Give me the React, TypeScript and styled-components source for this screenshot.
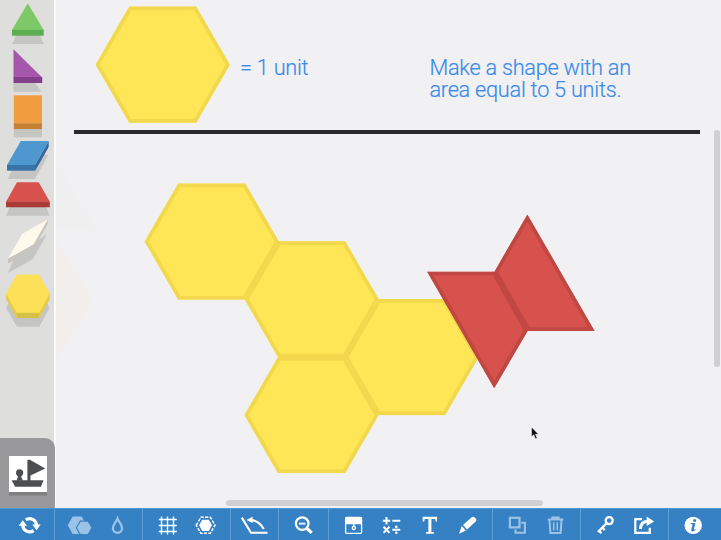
import React from "react";
import styled, { createGlobalStyle } from "styled-components";

const Global = createGlobalStyle`
  html, body { margin: 0; padding: 0; overflow: hidden; }
  body { font-family: Roboto, "Liberation Sans", sans-serif; }
  svg { display: block; flex: none; }
`;

const Page = styled.div`
  width: 721px;
  height: 540px;
  display: flex;
  flex-direction: column;
  background: #f1f1f3;
  overflow: hidden;
`;
const Main = styled.div`
  display: flex;
  height: 508px;
`;
const Sidebar = styled.aside`
  width: 56px;
  box-sizing: border-box;
  border-right: 2px solid #fbfbfb;
  background: #dededc;
  display: flex;
  flex-direction: column;
  justify-content: space-between;
`;
const Palette = styled.div`
  display: flex;
  flex-direction: column;
`;
const SlideTab = styled.div`
  width: 55px;
  height: 70px;
  box-sizing: border-box;
  padding: 18px 0 0 8.5px;
  background: #99999b;
  border-radius: 0 10px 0 0;
`;
const Tile = styled.div`
  width: 38.5px;
  height: 35.5px;
  background: #fff;
  box-shadow: 0 3.5px 0 #808082;
`;
const Canvas = styled.main`
  position: relative;
  width: 665px;
  height: 508px;
  overflow: hidden;
`;
const Header = styled.header`
  height: 130px;
  display: flex;
  padding-left: 40px;
  box-sizing: border-box;
`;
const Label = styled.p<{ $left: number }>`
  margin: 0 0 0 ${(p) => p.$left}px;
  padding-top: 57px;
  font-size: 21.7px;
  font-weight: 300;
  line-height: 22px;
  letter-spacing: -0.24px;
  color: #3a8aea;
  -webkit-text-stroke: 0.2px #3a8aea;
  white-space: nowrap;
`;
const Rule = styled.hr`
  width: 626.5px;
  height: 3.5px;
  margin: 0 0 0 17.5px;
  border: 0;
  background: #29292b;
`;
const Board = styled.svg`
  position: absolute;
  left: 0;
  top: 0;
`;
const ScrollThumb = styled.div<{ $vertical?: boolean }>`
  position: absolute;
  background: #d0d0d1;
  border-radius: 3px;
  ${(p) =>
    p.$vertical
      ? "right: 1px; top: 130px; width: 6px; height: 237px;"
      : "left: 170px; bottom: 2.5px; width: 317px; height: 6px;"}
`;
const Toolbar = styled.nav`
  height: 32px;
  display: flex;
  background: #3581c4;
  box-shadow: inset 0 1px 0 #4f97d3;
`;
const Group = styled.div<{ $width: number; $last?: boolean; $shift?: number }>`
  width: ${(p) => p.$width}px;
  height: 32px;
  box-sizing: border-box;
  display: flex;
  justify-content: center;
  padding-left: ${(p) => p.$shift ?? 0}px;
  border-right: ${(p) => (p.$last ? 0 : 1)}px solid #5b9fd8;
`;
const Tool = styled.button<{ $disabled?: boolean }>`
  width: 38px;
  height: 32px;
  padding: 0;
  border: 0;
  flex: none;
  background: none;
  color: ${(p) => (p.$disabled ? "#9cc3e6" : "#ffffff")};
`;

const HEX = "-0.4,57.8 33.2,-0.3 100.3,-0.3 133.9,57.8 100.3,115.9 33.2,115.9";

function Shape({ id, points, fill, edge }: { id: string; points: string; fill: string; edge: string }) {
  return (
    <>
      <clipPath id={id}>
        <polygon points={points} />
      </clipPath>
      <polygon points={points} fill={fill} stroke={edge} strokeWidth="7.4" clipPath={`url(#${id})`} />
    </>
  );
}

function Hexagon({ id }: { id: string }) {
  return <Shape id={id} points={HEX} fill="#ffe657" edge="#f2d84d" />;
}

function Swatch({ top, height, children }: { top: number; height: number; children: React.ReactNode }) {
  return (
    <svg width="54" height={height} viewBox={`0 ${top} 54 ${height}`}>
      {children}
    </svg>
  );
}

const SHADOW = "#c5c5c4";

function ShapePalette() {
  return (
    <Palette>
      <Swatch top={0} height={46}>
        <polygon points="16,35 40,35 43.5,44 12.5,44" fill={SHADOW} />
        <rect x="12" y="29.8" width="31.7" height="5.9" fill="#5bad52" />
        <polygon points="27.8,3.2 43.7,30 12,30" fill="#7dc968" />
      </Swatch>
      <Swatch top={46} height={47}>
        <polygon points="13.5,82 34,82 42,91.7 13.5,91.7" fill={SHADOW} />
        <polygon points="13.5,49.3 42.2,77.4 13.5,77.4" fill="#a557ab" />
        <rect x="13.5" y="77" width="28.7" height="6" fill="#833f8b" />
      </Swatch>
      <Swatch top={93} height={46}>
        <rect x="13.8" y="128" width="28.2" height="9.3" fill={SHADOW} />
        <rect x="13.8" y="95.3" width="28.2" height="28.2" fill="#ef9d3e" />
        <rect x="13.8" y="123.3" width="28.2" height="5.7" fill="#c58034" />
      </Swatch>
      <Swatch top={139} height={41}>
        <polygon points="7.5,179 12,170 34,165 42,155 48.3,155 35,179" fill={SHADOW} />
        <polygon points="48.7,141 48.7,147 35.2,170.7 35,165" fill="#32689e" />
        <rect x="7" y="164.7" width="28.2" height="6" fill="#3974a7" />
        <polygon points="20.8,141 48.7,141 35,165 7,165" fill="#4f98cf" />
      </Swatch>
      <Swatch top={180} height={36}>
        <polygon points="10,206 46,206 49.7,215.8 6,215.8" fill={SHADOW} />
        <rect x="6" y="201.3" width="43.8" height="6" fill="#a93c39" />
        <polygon points="17,182.3 38.7,182.3 49.8,201.7 6,201.7" fill="#d7524d" />
      </Swatch>
      <Swatch top={216} height={57}>
        <polygon points="47,234 33,259 8,273 13,261 33,244" fill={SHADOW} />
        <polygon points="8,258.5 33.7,243 47.7,219.5 47.7,224 33.7,248.7 8,263.8" fill="#c8c5c0" />
        <polygon points="47.7,219.5 33.5,244.5 8,258.6 22.3,233.7" fill="#fff9ec" />
      </Swatch>
      <Swatch top={273} height={55}>
        <polygon points="6,308 10,300 46,300 49.5,308 39.3,326.7 17,326.7" fill={SHADOW} />
        <polygon points="6,293.5 49.7,293.5 49.7,299 39.2,318 16.8,318 6,299" fill="#e6cb49" />
        <rect x="16.8" y="311" width="22.4" height="7" fill="#d7c144" />
        <polygon points="6,293.5 16.8,274.4 39,274.4 49.7,293.5 39.2,312.7 16.8,312.7" fill="#fce158" />
      </Swatch>
    </Palette>
  );
}

function Boat() {
  return (
    <svg width="38.5" height="35.5" viewBox="0 0 38.5 35.5" fill="#4d4e50">
      <path d="M2.7 24.2H34.5L32 30.7H6z" />
      <path d="M18.4 3.7h2.5l15.3 8.7-14.7 7V25h-3.1z" />
      <circle cx="10.6" cy="16.8" r="3.6" />
      <path d="M8.8 19h3.5v2.2l1.8 3.5H7.5l1.3-3.5z" />
    </svg>
  );
}

function Icon({ children }: { children: React.ReactNode }) {
  return (
    <svg width="38" height="32" viewBox="0.5 0 38 32" fill="currentColor" stroke="none">
      {children}
    </svg>
  );
}

const line = (w: number) => ({ fill: "none", stroke: "currentColor", strokeWidth: w });

function BottomBar() {
  return (
    <Toolbar>
      <Group $width={55} $shift={6}>
        <Tool aria-label="Reset">
          <Icon>
            <path d="M12.3 16v1.1a6.9 6.9 0 0 0 10.8 5.5M26 18.4v-1.1a6.9 6.9 0 0 0-10.8-5.5" {...line(3.2)} />
            <path d="M8.1 17.8l4.2-5.6 4.2 5.6zM21.8 16.6l4.2 5.6 4.2-5.6z" />
          </Icon>
        </Tool>
      </Group>
      <Group $width={88}>
        <Tool $disabled aria-label="Group">
          <Icon>
            <path d="M7.3 17.2l4.8-8.6h9l4.9 8.6-4.9 8.7h-9z" />
            <path d="M16.5 19.8l3.6-6.1h7.2l3.6 6.1-3.6 6.2h-7.2z" stroke="#3581c4" strokeWidth="2.4" />
            <path d="M16.5 19.8l3.6-6.1h7.2l3.6 6.1-3.6 6.2h-7.2z" />
          </Icon>
        </Tool>
        <Tool $disabled aria-label="Colour">
          <Icon>
            <path d="M19 10.6c-1.2 3.2-4.6 6-4.6 9.6a4.6 4.6 0 0 0 9.2 0c0-3.6-3.4-6.4-4.6-9.6z" {...line(2.3)} />
          </Icon>
        </Tool>
      </Group>
      <Group $width={88}>
        <Tool aria-label="Grid">
          <Icon>
            <path d="M13 8.5v18M19 8.5v18M25 8.5v18M10.3 11.5h18M10.3 17.5h18M10.3 23.5h18" {...line(1.4)} />
          </Icon>
        </Tool>
        <Tool aria-label="Snap">
          <Icon>
            <path d="M9.7 17.3l4.7-8h9.4l4.7 8-4.7 8h-9.4z" {...line(1.5)} strokeDasharray="3.2 1.3" />
            <path d="M12.6 17.3l3.2-5.6h6.5l3.2 5.6-3.2 5.7h-6.5z" />
          </Icon>
        </Tool>
      </Group>
      <Group $width={48}>
        <Tool aria-label="Rotate">
          <Icon>
            <path d="M6.3 9.6l9.2 15.1h16.5" {...line(2.1)} />
            <path d="M14.5 12.1c6-.2 10.7 3.6 13.8 8.9" {...line(2.1)} />
            <path d="M10.9 11.9l6.2-3.2v6.3z" />
          </Icon>
        </Tool>
      </Group>
      <Group $width={50}>
        <Tool aria-label="Zoom out">
          <Icon>
            <circle cx="17.7" cy="15.6" r="6.3" {...line(2.2)} />
            <path d="M14.5 15.6h6.4" {...line(1.8)} />
            <path d="M22.3 20.3l4.9 4.6" {...line(3.3)} />
          </Icon>
        </Tool>
      </Group>
      <Group $width={164}>
        <Tool aria-label="Cover">
          <Icon>
            <rect x="11.1" y="9.5" width="16" height="15.8" rx="1.2" {...line(1.3)} />
            <path d="M11 9h16.4v7.3H20v1.8h-1.4v-1.8H11z" />
            <circle cx="19.3" cy="19.9" r="1.6" {...line(1.3)} />
          </Icon>
        </Tool>
        <Tool aria-label="Math">
          <Icon>
            <path d="M10.3 12.7h7.4M14 9v7.4M19.8 12.7h8M19.8 21.8h8M11 18.7l6 6.2M17 18.7l-6 6.2" {...line(2)} />
            <circle cx="23.8" cy="18.9" r="1.3" />
            <circle cx="23.8" cy="24.7" r="1.3" />
          </Icon>
        </Tool>
        <Tool aria-label="Text">
          <Icon>
            <path d="M12.2 8.8h14.4v4.6h-1.5l-.5-2.5h-3.7v13h2.4v1.8h-7.8v-1.8h2.4v-13h-3.7l-.5 2.5h-1.5z" />
          </Icon>
        </Tool>
        <Tool aria-label="Draw">
          <Icon>
            <path d="M23.5 9.1q1.4-1 2.5.2l1.6 1.8q.9 1.1-.2 2.1l-8.8 8.2-4.1-4.5zM13.2 18l4.2 4.6-6.8 3.1z" />
          </Icon>
        </Tool>
      </Group>
      <Group $width={88}>
        <Tool $disabled aria-label="Duplicate">
          <Icon>
            <rect x="11.4" y="9.8" width="9.6" height="9.6" {...line(2.2)} />
            <path d="M22.8 14.8h3.6v10H17v-3.4" {...line(2.1)} />
          </Icon>
        </Tool>
        <Tool $disabled aria-label="Delete">
          <Icon>
            <path d="M11.2 11.4h15.6M15.8 11V9.5h6.4V11M13 12l.9 12.9h10.2L25 12" {...line(2)} />
            <path d="M17.2 14.3v8.2M20.8 14.3v8.2" {...line(1.6)} />
          </Icon>
        </Tool>
      </Group>
      <Group $width={88}>
        <Tool aria-label="Key">
          <Icon>
            <circle cx="22.7" cy="12.6" r="3.5" {...line(2.3)} />
            <path d="M20.2 15.1l-8.8 8.9M15.7 19.5l2.6 2.6M12.5 22.7l2.5 2.5" {...line(2.3)} />
          </Icon>
        </Tool>
        <Tool aria-label="Share">
          <Icon>
            <path d="M17.6 11.2h-6.8v13.6h14.5v-5" {...line(2.2)} />
            <path d="M15.9 21c.2-5 2.8-7.6 7.2-7.8" {...line(3.1)} />
            <path d="M22.2 8.6l7.4 4.8-7.4 4.7z" />
          </Icon>
        </Tool>
      </Group>
      <Group $width={52} $last>
        <Tool aria-label="Info">
          <Icon>
            <circle cx="17.7" cy="17.4" r="8.7" />
            <g fill="#3581c4">
              <circle cx="19.1" cy="12.6" r="1.5" />
              <path d="M15.2 15.1h4.8l-1.6 5.8c-.2.8.3 1 1.4.2l.4.6c-2.7 2.5-5 2.1-4.4-.3l1.2-4.6c.1-.5-.5-.8-1.8-.8z" />
            </g>
          </Icon>
        </Tool>
      </Group>
    </Toolbar>
  );
}

const hexes = [
  { x: 89, y: 183.8 },
  { x: 189, y: 241.6 },
  { x: 288.8, y: 299.4 },
  { x: 188.8, y: 357.3 },
];

export default function App() {
  return (
    <Page>
      <Global />
      <Main>
        <Sidebar>
          <ShapePalette />
          <SlideTab>
            <Tile>
              <Boat />
            </Tile>
          </SlideTab>
        </Sidebar>
        <Canvas>
          <Header>
            <svg width="134" height="130" viewBox="0 -6.9 134 130">
              <Hexagon id="unit" />
            </svg>
            <Label $left={10}>= 1 unit</Label>
            <Label $left={121}>
              Make a shape with an
              <br />
              area equal to 5 units.
            </Label>
          </Header>
          <Rule />
          <Board width="665" height="508" viewBox="0 0 665 508">
            <polygon points="0,165 7,175 40,230 0,230" fill="#f0f0f0" />
            <polygon points="0,242 4,245 37,301 0,359" fill="#f2efed" />
            {hexes.map((h, i) => (
              <g key={i} transform={`translate(${h.x} ${h.y})`}>
                <Hexagon id={`hex${i}`} />
              </g>
            ))}
            <g transform="translate(371 271.6)">
              <Shape id="trapA" points="0,0 68,0 101,58.8 67.2,116.6" fill="#d7524c" edge="#c04742" />
            </g>
            <g transform="translate(438 214.4)">
              <Shape id="trapB" points="33.4,0 100.6,116.5 33.3,116.5 0,58" fill="#d7524c" edge="#c04742" />
            </g>
            <path
              d="M475.5 427v9.8l2.2-2 1.8 4 1.7-.8-1.8-3.8h3.1z"
              fill="#111"
              stroke="#fff"
              strokeWidth=".5"
            />
          </Board>
          <ScrollThumb />
          <ScrollThumb $vertical />
        </Canvas>
      </Main>
      <BottomBar />
    </Page>
  );
}
